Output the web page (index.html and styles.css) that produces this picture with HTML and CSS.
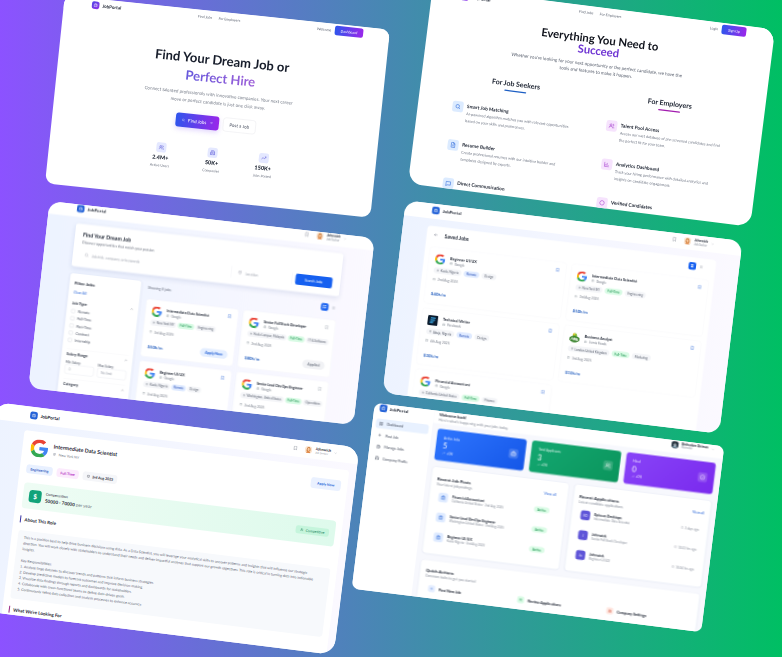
FILE: index.html
```html
<!DOCTYPE html>
<html lang="en">
<head>
<meta charset="utf-8">
<meta name="viewport" content="width=device-width, initial-scale=1">
<title>JobPortal screens</title>
<link rel="stylesheet" href="styles.css">
</head>
<body>
<svg class="defs" aria-hidden="true">
  <symbol id="case" viewBox="0 0 24 24"><rect x="3" y="7" width="18" height="13" rx="2"/><path d="M8 7V5a2 2 0 0 1 2-2h4a2 2 0 0 1 2 2v2M8 7v13M16 7v13"/></symbol>
  <symbol id="search" viewBox="0 0 24 24"><circle cx="11" cy="11" r="7"/><path d="M16 16l5 5"/></symbol>
  <symbol id="users" viewBox="0 0 24 24"><circle cx="9" cy="8" r="4"/><path d="M2 21v-2a5 5 0 0 1 5-5h4a5 5 0 0 1 5 5v2M16 4a4 4 0 0 1 0 8M19 15a5 5 0 0 1 3 4v2"/></symbol>
  <symbol id="building" viewBox="0 0 24 24"><path d="M6 21V4a1 1 0 0 1 1-1h10a1 1 0 0 1 1 1v17zM6 11H3v10h3M18 9h3v12h-3M10 7h4M10 11h4M10 15h4"/></symbol>
  <symbol id="trend" viewBox="0 0 24 24"><path d="M2 17l7-7 5 5 8-9M16 6h6v6"/></symbol>
  <symbol id="file" viewBox="0 0 24 24"><path d="M6 2h8l5 5v15H5V3zM14 2v6h5M9 12h6M9 16h6"/></symbol>
  <symbol id="chat" viewBox="0 0 24 24"><path d="M3 5h18v13H8l-5 4z"/></symbol>
  <symbol id="chart" viewBox="0 0 24 24"><path d="M3 3v18h18M8 17v-6M13 17V6M18 17v-3"/></symbol>
  <symbol id="shield" viewBox="0 0 24 24"><circle cx="12" cy="12" r="9"/><path d="M8 12l3 3 5-6"/></symbol>
  <symbol id="ring" viewBox="0 0 24 24"><path d="M12 3l7 3 2 6-3 7-6 2-7-3-2-6 3-7z"/></symbol>
  <symbol id="mark" viewBox="0 0 24 24"><path d="M6 3h12v18l-6-5-6 5z"/></symbol>
  <symbol id="pin" viewBox="0 0 24 24"><path d="M12 22s8-7 8-13a8 8 0 0 0-16 0c0 6 8 13 8 13z"/><circle cx="12" cy="9" r="3"/></symbol>
  <symbol id="cal" viewBox="0 0 24 24"><rect x="3" y="5" width="18" height="16" rx="2"/><path d="M3 10h18M8 2v5M16 2v5"/></symbol>
  <symbol id="clock" viewBox="0 0 24 24"><circle cx="12" cy="12" r="9"/><path d="M12 7v5l3 2"/></symbol>
  <symbol id="down" viewBox="0 0 24 24"><path d="M5 9l7 7 7-7"/></symbol>
  <symbol id="up" viewBox="0 0 24 24"><path d="M5 16l7-7 7 7"/></symbol>
  <symbol id="grid" viewBox="0 0 24 24"><rect x="4" y="4" width="6" height="6"/><rect x="14" y="4" width="6" height="6"/><rect x="4" y="14" width="6" height="6"/><rect x="14" y="14" width="6" height="6"/></symbol>
  <symbol id="list" viewBox="0 0 24 24"><path d="M4 6h16M4 12h16M4 18h16"/></symbol>
  <symbol id="back" viewBox="0 0 24 24"><path d="M21 12H4M11 5l-7 7 7 7"/></symbol>
  <symbol id="go" viewBox="0 0 24 24"><path d="M3 12h17M13 5l7 7-7 7"/></symbol>
  <symbol id="plus" viewBox="0 0 24 24"><path d="M12 4v16M4 12h16"/></symbol>
  <symbol id="google" viewBox="0 0 48 48"><g stroke="none"><path fill="#ea4335" d="M24 9.500c3.540 0 6.710 1.220 9.210 3.600l6.850-6.850C35.900 2.380 30.470 0 24 0 14.620 0 6.510 5.380 2.560 13.220l7.980 6.190C12.430 13.720 17.740 9.500 24 9.500z"/><path fill="#4285f4" d="M46.980 24.550c0-1.570-.15-3.090-.38-4.550H24v9.020h12.940c-.58 2.960-2.260 5.480-4.780 7.180l7.730 6c4.510-4.180 7.090-10.360 7.090-17.650z"/><path fill="#fbbc05" d="M10.530 28.590A14.500 14.500 0 0 1 9.770 24c0-1.600.27-3.140.76-4.590l-7.980-6.190A24 24 0 0 0 0 24c0 3.880.92 7.540 2.560 10.780z"/><path fill="#34a853" d="M24 48c6.480 0 11.930-2.130 15.890-5.810l-7.730-6c-2.150 1.450-4.920 2.300-8.160 2.300-6.260 0-11.570-4.220-13.470-9.910l-7.980 6.190C6.510 42.620 14.620 48 24 48z"/></g></symbol>
  <symbol id="bars" viewBox="0 0 48 48"><g stroke="none"><rect width="48" height="48" rx="8" fill="#0c1c2e"/><path fill="#39a9e8" d="M15 10h22l-4 6H11zM13 20h22l-4 6H11zM12 30h16l-4 7H10z"/></g></symbol>
  <symbol id="tree" viewBox="0 0 48 48"><g stroke="none"><circle cx="24" cy="13" r="10" fill="#8bc53f"/><circle cx="20" cy="9" r="5" fill="#e9c52e"/><ellipse cx="24" cy="31" rx="24" ry="15" fill="#2f7d22"/><path fill="none" stroke="#fff" stroke-width="4" d="M8 36l5-11 5 11M22 36V24l7 12V24M34 25v11h7M34 30h6"/></g></symbol>
  <symbol id="face" viewBox="0 0 32 32"><g stroke="none"><circle cx="16" cy="16" r="16" fill="#fbe6d2"/><path fill="#c9742f" d="M8 16c0-8 3-12 8-12s8 4 8 12v6H8z"/><ellipse cx="16" cy="15" rx="5" ry="7" fill="#f6c9a0"/><path fill="#e08b4b" d="M7 30c1-6 4-9 9-9s8 3 9 9z"/></g></symbol>
  <symbol id="face2" viewBox="0 0 32 32"><g stroke="none"><circle cx="16" cy="16" r="16" fill="#31424f"/><path fill="#16202a" d="M6 14C6 6 10 2 16 2s10 4 10 12z"/><ellipse cx="16" cy="16" rx="6" ry="7" fill="#cfd9df"/><path fill="#8fb1c2" d="M6 29c1-5 5-7 10-7s9 2 10 7z"/><path fill="#1b2630" d="M9 13h14v3H9z"/></g></symbol>
</svg>

<main class="board">

<section class="slot slot-hero"><div class="screen hero">
  <header class="bar">
    <a class="brand violet" href="#"><i><svg><use href="#case"/></svg></i>JobPortal</a>
    <nav><a href="#">Find Jobs</a><a href="#">For Employers</a></nav>
    <div class="side"><span>Welcome</span><button class="cta">Dashboard</button></div>
  </header>
  <div class="hero-body">
    <h1>Find Your Dream Job or<br><em>Perfect Hire</em></h1>
    <p>Connect talented professionals with innovative companies. Your next career<br>move or perfect candidate is just one click away.</p>
    <div class="actions"><button class="cta"><svg><use href="#search"/></svg>Find Jobs<svg><use href="#go"/></svg></button><button class="plain">Post a Job</button></div>
    <ul class="stats">
      <li><i><svg><use href="#users"/></svg></i><b>2.4M+</b><span>Active Users</span></li>
      <li><i><svg><use href="#building"/></svg></i><b>50K+</b><span>Companies</span></li>
      <li><i><svg><use href="#trend"/></svg></i><b>150K+</b><span>Jobs Posted</span></li>
    </ul>
  </div>
</div></section>

<section class="slot slot-features"><div class="screen features">
  <header class="bar">
    <a class="brand violet" href="#"><i><svg><use href="#case"/></svg></i>JobPortal</a>
    <nav><a href="#">Find Jobs</a><a href="#">For Employers</a></nav>
    <div class="side"><a href="#">Login</a><button class="cta">Sign Up</button></div>
  </header>
  <h2>Everything You Need to<br><em>Succeed</em></h2>
  <p class="lead">Whether you're looking for your next opportunity or the perfect candidate, we have the<br>tools and features to make it happen.</p>
  <div class="columns">
    <div class="seekers">
      <h3>For Job Seekers</h3>
      <article><i><svg><use href="#search"/></svg></i><div><h4>Smart Job Matching</h4><p>AI-powered algorithm matches you with relevant opportunities based on your skills and preferences.</p></div></article>
      <article><i><svg><use href="#file"/></svg></i><div><h4>Resume Builder</h4><p>Create professional resumes with our intuitive builder and templates designed by experts.</p></div></article>
      <article><i><svg><use href="#chat"/></svg></i><div><h4>Direct Communication</h4></div></article>
    </div>
    <div class="employers">
      <h3>For Employers</h3>
      <article><i><svg><use href="#users"/></svg></i><div><h4>Talent Pool Access</h4><p>Access our vast database of pre-screened candidates and find the perfect fit for your team.</p></div></article>
      <article><i><svg><use href="#chart"/></svg></i><div><h4>Analytics Dashboard</h4><p>Track your hiring performance with detailed analytics and insights on candidate engagement.</p></div></article>
      <article><i><svg><use href="#ring"/></svg></i><div><h4>Verified Candidates</h4></div></article>
    </div>
  </div>
</div></section>

<section class="slot slot-search"><div class="screen app search">
  <header class="bar">
    <a class="brand" href="#"><i><svg><use href="#case"/></svg></i>JobPortal</a>
    <div class="user"><svg class="bell"><use href="#mark"/></svg><svg class="face"><use href="#face"/></svg><p><b>Johnwick</b><span>Job Seeker</span></p><svg class="tiny"><use href="#down"/></svg></div>
  </header>
  <div class="finder">
    <h2>Find Your Dream Job</h2>
    <p>Discover opportunities that match your passion</p>
    <form>
      <label class="what"><svg><use href="#search"/></svg><input type="text" aria-label="Job" placeholder="Job title, company, or keywords"></label>
      <label class="where"><svg><use href="#pin"/></svg><input type="text" aria-label="Location" placeholder="Location"></label>
      <button type="button">Search Jobs</button>
    </form>
  </div>
  <div class="results">
    <aside>
      <h3>Filter Jobs</h3>
      <a href="#">Clear All</a>
      <h4>Job Type<svg><use href="#up"/></svg></h4>
      <label><input type="checkbox">Remote</label>
      <label><input type="checkbox">Full-Time</label>
      <label><input type="checkbox">Part-Time</label>
      <label><input type="checkbox">Contract</label>
      <label><input type="checkbox">Internship</label>
      <h4 class="ruled">Salary Range<svg><use href="#up"/></svg></h4>
      <div class="range">
        <label>Min Salary<input type="text" placeholder="0"></label>
        <label>Max Salary<input type="text" placeholder="No limit"></label>
      </div>
      <h4 class="ruled">Category<svg><use href="#up"/></svg></h4>
    </aside>
    <div class="found">
      <div class="tools"><span>Showing 8 jobs</span><button class="view on" aria-label="Grid"><svg><use href="#grid"/></svg></button><button class="view" aria-label="List"><svg><use href="#list"/></svg></button></div>
      <div class="jobs">
        <article class="job"><svg class="logo"><use href="#google"/></svg><div class="name"><h4>Intermediate Data Scientist</h4><p><svg><use href="#building"/></svg>Google</p></div><svg class="save on"><use href="#mark"/></svg><div class="tags"><span><svg><use href="#pin"/></svg>New York NY</span><span class="green">Full-Time</span><span>Engineering</span></div><p class="date"><svg><use href="#cal"/></svg>3rd Aug 2025</p><div class="pay"><b>$50k/m</b><button>Apply Now</button></div></article>
        <article class="job"><svg class="logo"><use href="#google"/></svg><div class="name"><h4>Senior Full Stack Developer</h4><p><svg><use href="#building"/></svg>Google</p></div><svg class="save"><use href="#mark"/></svg><div class="tags"><span><svg><use href="#pin"/></svg>Kuala Lumpur, Malaysia</span><span class="green">Full-Time</span><span>IT &amp; Software</span></div><p class="date"><svg><use href="#cal"/></svg>2nd Aug 2025</p><div class="pay"><b>$80k/m</b><button class="grey">Applied</button></div></article>
        <article class="job"><svg class="logo"><use href="#google"/></svg><div class="name"><h4>Beginner UI/UX</h4><p><svg><use href="#building"/></svg>Google</p></div><svg class="save on"><use href="#mark"/></svg><div class="tags"><span><svg><use href="#pin"/></svg>Kuala, Nigeria</span><span class="blue">Remote</span><span>Design</span></div><p class="date"><svg><use href="#cal"/></svg>2nd Aug 2025</p></article>
        <article class="job"><svg class="logo"><use href="#google"/></svg><div class="name"><h4>Senior Lead DevOps Engineer</h4><p><svg><use href="#building"/></svg>Google</p></div><svg class="save"><use href="#mark"/></svg><div class="tags"><span><svg><use href="#pin"/></svg>Washington, United States</span><span class="green">Full-Time</span><span>Operations</span></div><p class="date"><svg><use href="#cal"/></svg>2nd Aug 2025</p></article>
      </div>
    </div>
  </div>
</div></section>

<section class="slot slot-saved"><div class="screen app saved">
  <header class="bar">
    <a class="brand" href="#"><i><svg><use href="#case"/></svg></i>JobPortal</a>
    <div class="user"><svg class="bell"><use href="#mark"/></svg><svg class="face"><use href="#face"/></svg><p><b>Johnwick</b><span>Job Seeker</span></p><svg class="tiny"><use href="#down"/></svg></div>
  </header>
  <div class="sheet">
    <div class="tools"><svg class="arrow"><use href="#back"/></svg><h2>Saved Jobs</h2><button class="view on" aria-label="Grid"><svg><use href="#grid"/></svg></button><button class="view" aria-label="List"><svg><use href="#list"/></svg></button></div>
    <div class="jobs">
      <article class="job"><svg class="logo"><use href="#google"/></svg><div class="name"><h4>Beginner UI/UX</h4><p><svg><use href="#building"/></svg>Google</p></div><svg class="save on"><use href="#mark"/></svg><div class="tags"><span><svg><use href="#pin"/></svg>Kuala, Nigeria</span><span class="blue">Remote</span><span>Design</span></div><p class="date"><svg><use href="#cal"/></svg>2nd Aug 2025</p><div class="pay"><b>$40k/m</b></div></article>
      <article class="job"><svg class="logo"><use href="#google"/></svg><div class="name"><h4>Intermediate Data Scientist</h4><p><svg><use href="#building"/></svg>Google</p></div><svg class="save on"><use href="#mark"/></svg><div class="tags"><span><svg><use href="#pin"/></svg>New York NY</span><span class="green">Full-Time</span><span>Engineering</span></div><p class="date"><svg><use href="#cal"/></svg>3rd Aug 2025</p><div class="pay"><b>$50k/m</b></div></article>
      <article class="job"><svg class="logo"><use href="#bars"/></svg><div class="name"><h4>Technical Writer</h4><p><svg><use href="#building"/></svg>Facebook</p></div><svg class="save on"><use href="#mark"/></svg><div class="tags"><span><svg><use href="#pin"/></svg>Abuja, Nigeria</span><span class="blue">Remote</span><span>Design</span></div><p class="date"><svg><use href="#cal"/></svg>4th Aug 2025</p><div class="pay"><b>$30k/m</b></div></article>
      <article class="job"><svg class="logo"><use href="#tree"/></svg><div class="name"><h4>Business Analyst</h4><p><svg><use href="#building"/></svg>Jumia Foods</p></div><svg class="save on"><use href="#mark"/></svg><div class="tags"><span><svg><use href="#pin"/></svg>London United Kingdom</span><span class="green">Full-Time</span><span>Marketing</span></div><p class="date"><svg><use href="#cal"/></svg>3rd Aug 2025</p><div class="pay"><b>$10k/m</b></div></article>
      <article class="job"><svg class="logo"><use href="#google"/></svg><div class="name"><h4>Financial Accountant</h4><p><svg><use href="#building"/></svg>Google</p></div><svg class="save on"><use href="#mark"/></svg><div class="tags"><span><svg><use href="#pin"/></svg>California United States</span><span class="green">Full-Time</span><span>Finance</span></div></article>
    </div>
  </div>
</div></section>

<section class="slot slot-detail"><div class="screen app detail">
  <header class="bar">
    <a class="brand" href="#"><i><svg><use href="#case"/></svg></i>JobPortal</a>
    <div class="user"><svg class="bell"><use href="#mark"/></svg><svg class="face"><use href="#face"/></svg><p><b>Johnwick</b><span>Job Seeker</span></p><svg class="tiny"><use href="#down"/></svg></div>
  </header>
  <div class="sheet">
    <div class="title"><svg class="logo"><use href="#google"/></svg><div><h2>Intermediate Data Scientist</h2><p><svg><use href="#pin"/></svg>New York NY</p></div><button>Apply Now</button></div>
    <div class="chips"><span class="blue">Engineering</span><span class="pink">Full-Time</span><span><svg><use href="#clock"/></svg>3rd Aug 2025</span></div>
    <div class="money"><i>$</i><p><b>Compensation</b><span><b>50000 - 70000</b> per year</span></p><span class="fair"><svg><use href="#users"/></svg>Competitive</span></div>
    <h3>About This Role</h3>
    <div class="story">
      <p>This is a position best to help drive business decisions using data. As a Data Scientist, you will leverage your analytical skills to uncover patterns and insights that will influence our strategic<br>direction. You will work closely with stakeholders to understand their needs and deliver impactful analyses that support our growth objectives. This role is critical in turning data into actionable<br>insights.</p>
      <p>Key Responsibilities:</p>
      <ol><li>1. Analyze large datasets to discover trends and patterns that inform business strategies.</li><li>2. Develop predictive models to forecast outcomes and improve decision-making.</li><li>3. Visualize data findings through reports and dashboards for stakeholders.</li><li>4. Collaborate with cross-functional teams to define data-driven goals.</li><li>5. Continuously refine data collection and analysis processes to enhance accuracy.</li></ol>
    </div>
    <h3 class="rose">What We're Looking For</h3>
  </div>
</div></section>

<section class="slot slot-dash"><div class="screen dash">
  <aside>
    <a class="brand" href="#"><i><svg><use href="#case"/></svg></i>JobPortal</a>
    <a class="on" href="#"><svg><use href="#grid"/></svg>Dashboard</a>
    <a href="#"><svg><use href="#plus"/></svg>Post Job</a>
    <a href="#"><svg><use href="#case"/></svg>Manage Jobs</a>
    <a href="#"><svg><use href="#building"/></svg>Company Profile</a>
  </aside>
  <div class="work">
    <header><div><h2>Welcome back!</h2><p>Here's what's happening with your jobs today.</p></div><div class="user"><svg class="face"><use href="#face2"/></svg><p><b>Bethadam Deiman</b><span>Recruiter</span></p><svg class="tiny"><use href="#down"/></svg></div></header>
    <div class="totals">
      <div class="total t-blue"><p><span>Active Jobs</span><b>5</b><small><svg><use href="#trend"/></svg>+0%</small></p><i><svg><use href="#case"/></svg></i></div>
      <div class="total t-green"><p><span>Total Applicants</span><b>3</b><small><svg><use href="#trend"/></svg>+0%</small></p><i><svg><use href="#users"/></svg></i></div>
      <div class="total t-violet"><p><span>Hired</span><b>0</b><small><svg><use href="#trend"/></svg>+0%</small></p><i><svg><use href="#shield"/></svg></i></div>
    </div>
    <div class="panels">
      <section class="panel posts">
        <div class="head"><div><h3>Recent Job Posts</h3><p>Your latest job postings</p></div><a href="#">View all</a></div>
        <div class="row"><i><svg><use href="#case"/></svg></i><p><b>Financial Accountant</b><span>California United States · 2nd Aug 2025</span></p><em>Active</em></div>
        <div class="row"><i><svg><use href="#case"/></svg></i><p><b>Senior Lead DevOps Engineer</b><span>Washington United States · 2nd Aug 2025</span></p><em>Active</em></div>
        <div class="row"><i><svg><use href="#case"/></svg></i><p><b>Beginner UI/UX</b><span>Kuala Nigeria · 2nd Aug 2025</span></p><em>Active</em></div>
      </section>
      <section class="panel people">
        <div class="head"><div><h3>Recent Applications</h3><p>Latest candidate applications</p></div><a href="#">View all</a></div>
        <div class="row"><i>ED</i><p><b>Episcan Desktops</b><span>Intermediate Data Scientist</span></p><small><svg><use href="#clock"/></svg>3 days ago</small></div>
        <div class="row"><i>J</i><p><b>Johnwick</b><span>Senior Full Stack Developer</span></p><small><svg><use href="#clock"/></svg>10:33 hrs ago</small></div>
        <div class="row"><i>Jo</i><p><b>Johnwick</b><span>Beginner UI/UX</span></p><small><svg><use href="#clock"/></svg>10:34 hrs ago</small></div>
      </section>
    </div>
    <section class="panel quick">
      <h3>Quick Actions</h3><p>Common tasks to get you started</p>
      <div class="links"><a href="#"><i><svg><use href="#plus"/></svg></i>Post New Job</a><a href="#"><i class="g"><svg><use href="#users"/></svg></i>Review Applications</a><a href="#"><i class="r"><svg><use href="#building"/></svg></i>Company Settings</a></div>
    </section>
  </div>
</div></section>

</main>
</body>
</html>
```
FILE: styles.css
```css
* { box-sizing: border-box; margin: 0; padding: 0; }
body { font-family: Lato, "Open Sans", sans-serif; color: #1b2230; }
button, input { font: inherit; border: 0; background: none; color: inherit; }
a { color: inherit; text-decoration: none; }
ul, ol { list-style: none; }
i, em { font-style: normal; }
svg { width: 14px; height: 14px; fill: none; stroke: currentColor; stroke-width: 2; flex: none; }
.defs { position: absolute; width: 0; height: 0; }

.board { position: relative; height: 100vh; overflow: hidden; background: linear-gradient(90deg, #8c52ff, #00bf63); }

/* Each slot is one tilted preview; the page inside is drawn at four times its size and scaled down. */
.slot { position: absolute; overflow: hidden; background: #fff; }
.screen { display: flow-root; width: 400%; height: 400%; transform: scale(0.25); transform-origin: 0 0; font-size: 14px; }
.slot-hero { left: 6.9%; top: 1.8%; width: 41.8%; aspect-ratio: 327 / 189; transform: rotate(6deg); border-radius: 9px; }
.slot-features { left: 53.6%; top: 1.1%; width: 44.1%; aspect-ratio: 345 / 199; transform: rotate(7.2deg); border-radius: 14px; }
.slot-search { left: 4.8%; top: 33.4%; width: 41.8%; aspect-ratio: 327 / 188; transform: rotate(6.5deg); border-radius: 12px; }
.slot-saved { left: 50.2%; top: 33.5%; width: 43.4%; aspect-ratio: 339 / 194; transform: rotate(6.9deg); border-radius: 13px; }
.slot-detail { left: -2.4%; top: 64.6%; width: 46.9%; aspect-ratio: 367 / 209; transform: rotate(7.1deg); border-radius: 15px; }
.slot-dash { left: 46.3%; top: 64.5%; width: 45%; aspect-ratio: 352 / 187; transform: rotate(7.1deg); border-radius: 7px; }

.bar { display: flex; align-items: center; justify-content: space-between; height: 52px; padding: 0 104px 0 112px; background: #fff; }
.bar nav, .side { display: flex; align-items: center; gap: 26px; color: #5b6270; }
.side { gap: 14px; }
.brand { display: flex; align-items: center; gap: 12px; font-size: 18px; font-weight: 700; color: #1b2230; }
.brand i { display: grid; place-items: center; width: 30px; height: 30px; border-radius: 8px; background: #2563d8; color: #fff; }
.brand.violet i { background: linear-gradient(135deg, #4f46e5, #9333ea); }
.brand svg { width: 18px; height: 18px; }
.cta { background: linear-gradient(90deg, #2f55ec, #9a27ea); color: #fff; border-radius: 8px; }
.side .cta { height: 38px; padding: 0 24px; }
.features .side .cta { padding: 0 26px; }
em { color: #6f35d3; }

.hero-body { display: flex; flex-direction: column; align-items: center; padding-top: 104px; text-align: center; }
.hero h1 { font-size: 52px; line-height: 72px; color: #171d2b; }
.hero h1 em { background: linear-gradient(90deg, #6658dc, #9d5fd8); -webkit-background-clip: text; background-clip: text; color: transparent; }
.hero-body > p { margin-top: 16px; font-size: 18px; line-height: 32px; color: #7b818d; }
.actions { display: flex; gap: 16px; margin-top: 38px; }
.actions button { display: flex; align-items: center; justify-content: center; gap: 12px; height: 56px; padding: 0 24px; border-radius: 12px; font-size: 18px; }
.actions .cta { box-shadow: 0 8px 20px #8b5cf640; }
.actions .plain { border: 2px solid #e9eaee; color: #4b5262; }
.stats { display: grid; grid-template-columns: repeat(3, 206px); margin-top: 70px; }
.stats li { display: flex; flex-direction: column; align-items: center; }
.stats i { display: grid; place-items: center; width: 40px; height: 40px; border-radius: 10px; background: #e4e8ff; color: #5552d6; }
.stats svg { width: 22px; height: 22px; }
.stats b { font-size: 22px; line-height: 40px; font-weight: 900; }
.stats span { line-height: 24px; color: #6d7380; }

.features .bar { height: 52px; padding: 0 112px 0 118px; }
.features h2 { margin-top: 52px; font-size: 45px; line-height: 46px; text-align: center; color: #10131c; }
.lead { margin-top: 20px; font-size: 18px; line-height: 28px; text-align: center; color: #5b6270; }
.columns { display: grid; grid-template-columns: 1fr 1fr; gap: 136px; margin: 54px 138px 0; }
.columns h3 { font-size: 28px; line-height: 40px; text-align: center; }
.columns h3::after { content: ""; display: block; width: 88px; height: 5px; margin: 8px auto 64px; border-radius: 3px; background: #1d5fc4; }
.employers h3::after { background: #a21caf; }
.columns article { display: flex; gap: 14px; margin-bottom: 67px; }
.columns article i { display: grid; place-items: center; width: 44px; height: 44px; border-radius: 10px; background: #dcebff; color: #2563d8; flex: none; }
.employers article i { background: #f6e3fd; color: #a034cc; }
.columns article svg { width: 24px; height: 24px; }
.columns h4 { font-size: 19px; line-height: 32px; }
.columns p { font-size: 15px; line-height: 28px; color: #6b7280; }

.app { background: linear-gradient(90deg, #edf3ff, #fbf9ff); }
.app .bar { height: 68px; padding: 0 110px 0 112px; }
.user { display: flex; align-items: center; gap: 12px; }
.user .bell { width: 20px; height: 20px; margin-right: 16px; color: #858b98; }
.user .face { width: 30px; height: 30px; }
.user b, .user span { display: block; font-size: 13px; line-height: 15px; }
.user span { font-size: 11px; color: #8a909c; }
.user .tiny { color: #a0a5b0; }
.search .bar { margin-top: -18px; }
.finder { margin: 26px 116px 0; padding: 26px 32px; height: 172px; border-radius: 10px; background: #fff; box-shadow: 0 8px 22px #1e3a8a1c; }
.finder h2 { font-size: 21px; line-height: 30px; }
.finder p { line-height: 30px; color: #6d7380; }
.finder form { display: flex; align-items: center; margin-top: 14px; gap: 12px; }
.finder label { display: flex; align-items: center; gap: 12px; height: 44px; padding: 0 14px; border-right: 2px solid #f2f3f6; color: #a0a5b0; }
.what { flex: 1; }
.where { width: 234px; }
.finder label svg { width: 18px; height: 18px; }
.finder input { width: 100%; min-width: 0; }
input::placeholder { color: #a0a5b0; opacity: 1; }
.finder button { height: 44px; width: 148px; border-radius: 8px; background: #1660f0; color: #fff; }
.results { display: grid; grid-template-columns: 286px 1fr; gap: 28px; margin: 28px 116px 0; }
.results aside { height: 520px; padding: 18px 20px; border-radius: 12px; background: #fff; box-shadow: 0 2px 10px #1e3a8a14; color: #4b5262; }
aside h3 { font-size: 18px; line-height: 38px; color: #1b2230; }
.results aside > a { display: block; line-height: 40px; color: #2563d8; }
aside h4 { display: flex; justify-content: space-between; align-items: center; line-height: 40px; font-size: 15px; color: #2a3140; }
.results aside > label { display: flex; align-items: center; gap: 12px; line-height: 29px; }
[type="checkbox"] { appearance: none; width: 15px; height: 15px; border: 1px solid #b9bec9; border-radius: 3px; }
.ruled { margin-top: 20px; border-top: 1px solid #eceef3; }
.range { display: grid; grid-template-columns: 1fr 1fr; gap: 14px; font-size: 13px; line-height: 22px; }
.range input { display: block; width: 100%; height: 38px; padding: 0 14px; border: 1px solid #d6dae2; border-radius: 8px; }
.tools { display: flex; align-items: center; gap: 6px; height: 40px; color: #6b7280; }
.tools span, .tools h2 { flex: 1; }
.tools h2 { font-size: 20px; color: #1b2230; }
.view { display: grid; place-items: center; width: 30px; height: 30px; border-radius: 7px; color: #9aa0ac; }
.view.on { background: #1660f0; color: #fff; }
.view svg { width: 16px; height: 16px; }
.jobs { display: grid; grid-template-columns: 1fr 1fr; gap: 18px 20px; }
.search .jobs { margin-top: 28px; }
.job { display: grid; grid-template-columns: 44px 1fr 18px; grid-template-rows: 48px 42px 32px auto; column-gap: 16px; height: 230px; padding: 22px 24px; border: 1px solid #f1f2f7; border-radius: 12px; background: #fff; align-content: start; align-items: center; }
.job > .logo { width: 42px; height: 42px; }
.job h4 { font-size: 14px; line-height: 22px; white-space: nowrap; }
.job .name p, .date { display: flex; align-items: center; gap: 8px; line-height: 20px; color: #7b818d; font-size: 13px; }
.name svg, .date svg { width: 12px; height: 12px; }
.save { width: 18px; height: 18px; color: #9aa0ac; align-self: start; }
.save.on { color: #2563d8; }
.tags, .date, .pay { grid-column: 1 / -1; }
.tags { display: flex; gap: 10px; }
.tags span { display: flex; align-items: center; gap: 5px; height: 24px; padding: 0 11px; border-radius: 12px; background: #f4f5f8; font-size: 12px; color: #5b6270; white-space: nowrap; }
.tags svg { width: 11px; height: 11px; }
.search .tags { gap: 6px; }
.search .tags span { padding: 0 9px; }
.tags .green { background: #d9fbe5; color: #15904a; }
.tags .blue { background: #dfeaff; color: #2a52b8; }
.pay { display: flex; justify-content: space-between; align-items: center; height: 40px; margin-top: 22px; }
.pay b { font-size: 17px; color: #2761c0; }
.pay button { height: 34px; padding: 0 20px; border-radius: 17px; background: #e4eeff; color: #2563d8; font-weight: 700; }
.pay .grey { background: #f1f2f5; color: #7b818d; }

.saved .bar { margin-top: -8px; padding: 0 112px 0 109px; }
.sheet { background: #fff; border-radius: 14px; }
.saved .sheet { margin: 29px 96px 0 99px; padding: 14px 20px; height: 720px; }
.saved .tools { padding: 0 22px 0 8px; }
.arrow { width: 18px; height: 18px; margin-right: 20px; }
.saved .jobs { margin-top: 28px; }
.saved .job { height: 228px; }
.saved .job h4 { font-size: 15px; }

.detail .bar { padding: 0 84px 0 145px; }
.detail .user b { font-size: 15px; }
.detail .sheet { margin: 28px 28px 0 130px; padding: 30px 26px; height: 800px; }
.detail .title { display: flex; align-items: center; gap: 20px; }
.title .logo { width: 72px; height: 72px; margin-left: 6px; }
.title div { flex: 1; }
.title h2 { font-size: 21px; line-height: 34px; }
.title p { display: flex; align-items: center; gap: 10px; line-height: 30px; color: #6b7280; }
.title button { height: 44px; padding: 0 26px; border-radius: 12px; background: #eaf1ff; color: #2563d8; font-weight: 700; }
.chips { display: flex; gap: 16px; margin-top: 32px; }
.chips span { display: flex; align-items: center; gap: 8px; height: 36px; padding: 0 16px; border-radius: 12px; background: #f5f6f9; font-weight: 700; }
.chips .blue { background: #e8f0ff; color: #2a52b8; }
.chips .pink { background: #fcebfd; color: #b02bc0; }
.money { display: flex; align-items: center; gap: 16px; height: 104px; margin-top: 37px; padding: 0 24px; border-radius: 14px; background: linear-gradient(90deg, #eefcf4, #defaec); }
.money i { display: grid; place-items: center; width: 50px; height: 50px; border-radius: 12px; background: #12a37a; color: #fff; font-size: 26px; font-weight: 700; }
.money p { flex: 1; line-height: 26px; }
.money p > b { display: block; font-weight: 400; }
.money p > span { font-size: 18px; color: #6b7280; }
.money p span b { color: #1b2230; }
.fair { display: flex; align-items: center; gap: 8px; height: 32px; padding: 0 18px; border-radius: 10px; background: #c5f5dc; color: #1b7f58; }
.detail h3 { margin: 30px 0; padding-left: 14px; border-left: 4px solid #3730a3; font-size: 18px; line-height: 28px; }
.detail .rose { border-color: #9d2b86; }
.story { height: 276px; padding: 16px 24px; border-radius: 12px; background: #f7f9fc; font-size: 14px; line-height: 23px; color: #5b6270; }
.story p { margin-bottom: 24px; white-space: nowrap; }
.story p + p { margin: 0; }

.dash { display: grid; grid-template-columns: 240px 1fr; background: #f7f8fd; }
.dash > aside { padding: 0 14px; background: #fff; }
.dash .brand { height: 34px; padding: 0 8px; margin-bottom: 26px; gap: 10px; font-size: 18px; }
.dash aside a:not(.brand) { display: flex; align-items: center; gap: 14px; height: 38px; margin-bottom: 8px; padding: 0 12px; border-radius: 10px; color: #4b5262; }
.dash aside .on { background: #e8f1ff; color: #2563d8; }
.dash aside a:not(.brand) svg { width: 18px; height: 18px; }
.work header { display: flex; justify-content: space-between; height: 50px; padding: 0 36px 0 22px; background: #fff; }
.work h2 { font-size: 16px; line-height: 24px; }
.work header p, .quick p, .head p { color: #8a909c; }
.work header .user { height: 34px; }
.work header .user b { color: #1b2230; }
.totals { display: grid; grid-template-columns: repeat(3, 1fr); gap: 22px; margin: 20px 24px 0 23px; }
.total { display: flex; justify-content: space-between; align-items: center; height: 126px; padding: 0 28px; border-radius: 12px; color: #fff; }
.total span, .total small { display: block; font-size: 13px; line-height: 24px; opacity: .85; }
.total b { display: block; font-size: 30px; line-height: 36px; font-weight: 400; }
.total small svg { margin-right: 4px; vertical-align: middle; }
.total i { display: grid; place-items: center; width: 38px; height: 38px; border-radius: 8px; background: #ffffff2c; }
.total i svg { width: 24px; height: 24px; }
.t-blue { background: linear-gradient(135deg, #2f76ff, #1557e8); }
.t-green { background: linear-gradient(135deg, #14a872, #0b955c); }
.t-violet { background: linear-gradient(135deg, #8844f8, #7a2aee); }
.panels { display: grid; grid-template-columns: 1fr 1fr; gap: 26px; margin: 28px 24px 0 23px; }
.panel { padding: 24px 22px; border-radius: 12px; background: #fff; box-shadow: 0 2px 8px #1e3a8a18; }
.panels .panel { height: 346px; }
.panel h3 { font-size: 18px; line-height: 28px; }
.head { display: flex; justify-content: space-between; align-items: center; height: 54px; }
.head a { color: #2563d8; }
.posts .head a { padding-right: 24px; }
.row { display: flex; align-items: center; gap: 16px; height: 80px; padding: 0 14px; }
.posts .row em { margin-right: 28px; }
.row i { display: grid; place-items: center; width: 38px; height: 38px; border-radius: 10px; background: #dfebff; color: #2563d8; font-size: 13px; }
.people .row i { background: #5f55d8; color: #e8e6ff; }
.row i svg { width: 20px; height: 20px; }
.row p { flex: 1; }
.row b, .row span { display: block; line-height: 18px; }
.row b { font-size: 14px; }
.row span, .row small { font-size: 12px; color: #8a909c; }
.row em { height: 24px; padding: 0 13px; border-radius: 12px; background: #dcfce7; color: #15904a; font-size: 13px; line-height: 24px; }
.row small { display: flex; align-items: center; gap: 5px; }
.row small svg { width: 12px; height: 12px; }
.quick { height: 180px; margin: 28px 24px 0 23px; }
.links { display: grid; grid-template-columns: repeat(3, 1fr); margin-top: 28px; }
.links a { display: flex; align-items: center; gap: 14px; padding-left: 18px; font-size: 15px; font-weight: 700; }
.links i { display: grid; place-items: center; width: 28px; height: 28px; border-radius: 8px; background: #e5eeff; color: #2563d8; }
.links .g { background: #dcfce7; color: #15904a; }
.links .r { background: #ffe8e2; color: #d3452b; }
```
